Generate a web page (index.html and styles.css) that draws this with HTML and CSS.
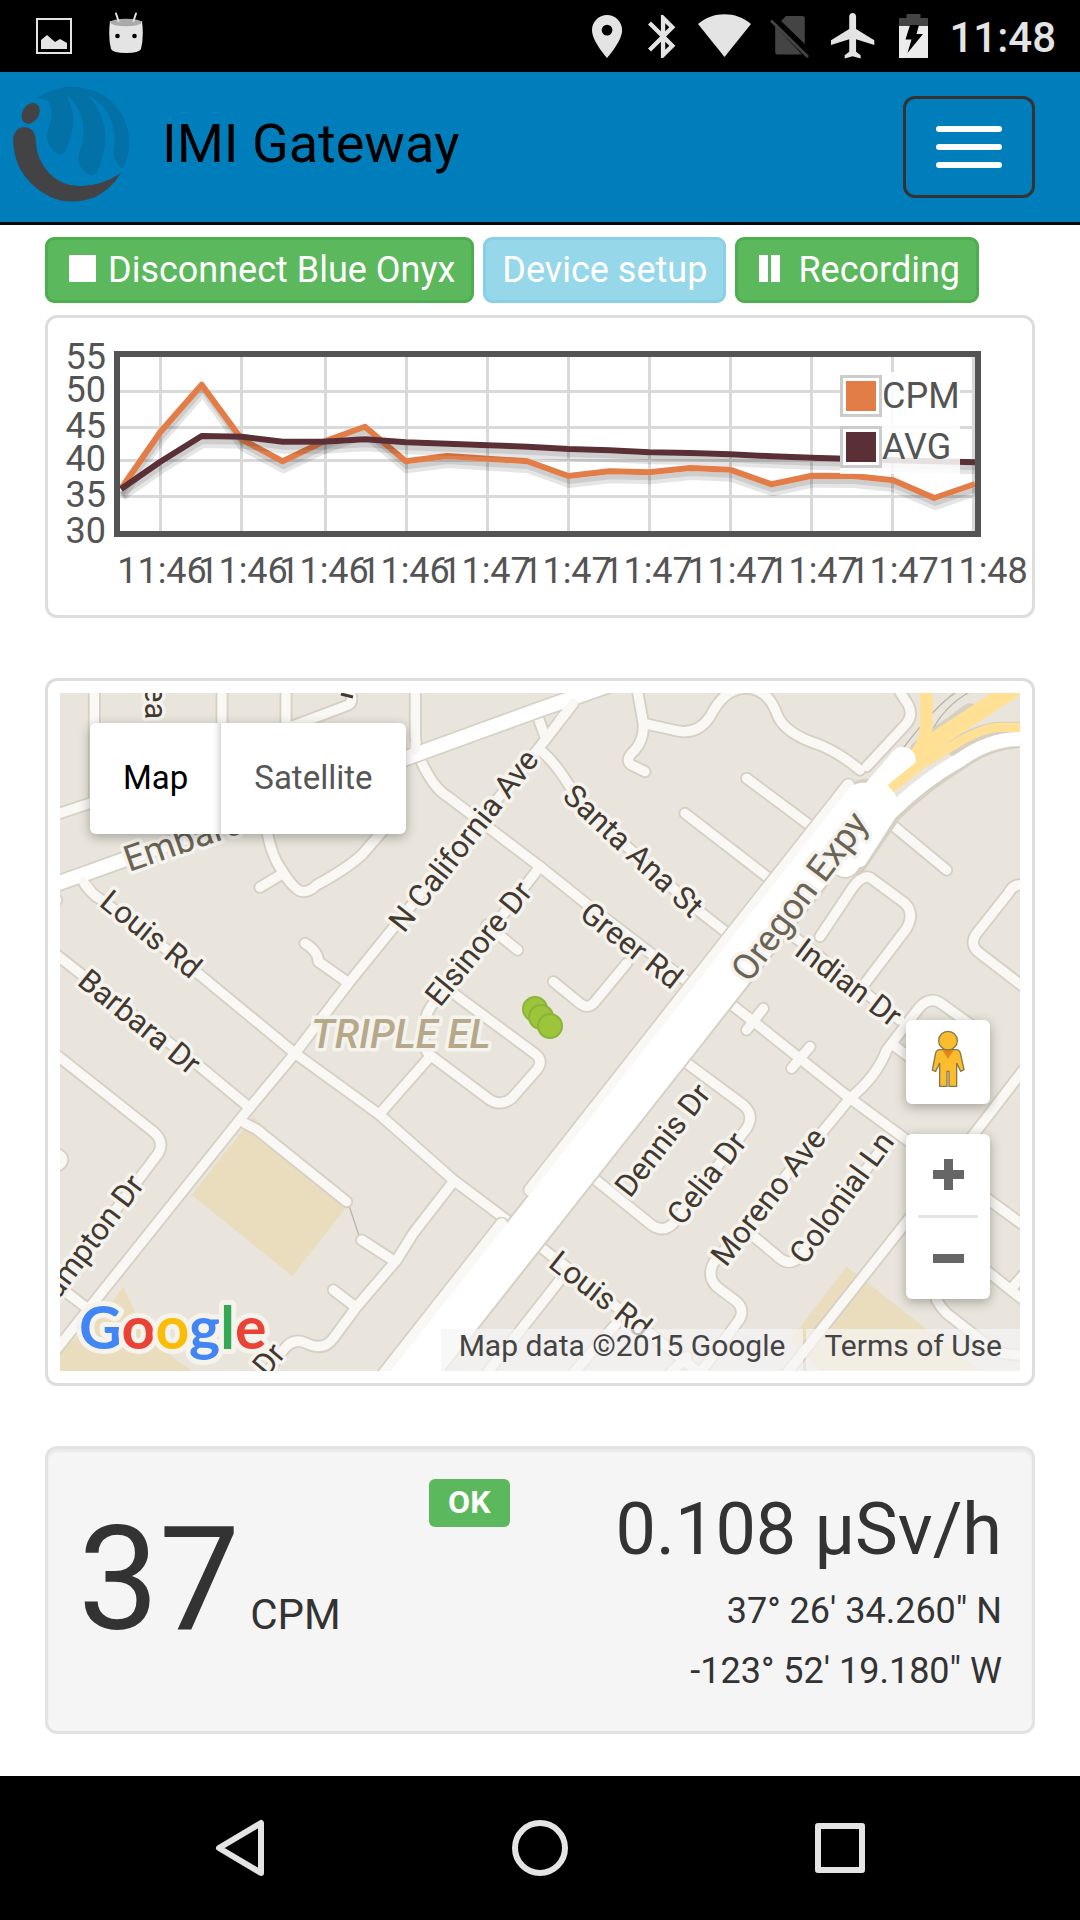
FILE: index.html
```html
<!DOCTYPE html>
<html lang="en">

<head>
    <meta charset="UTF-8">
    <meta name="viewport" content="width=device-width, initial-scale=1.0">
    <title>IMI Gateway</title>
    <link rel="stylesheet" href="styles.css">
</head>

<body>
    <!-- Status bar -->
    <div class="status-bar">
        <div class="status-left">
            <svg width="36" height="48" viewBox="0 0 36 48">
                <rect x="1" y="7" width="34" height="34" fill="none" stroke="#e4e4e4" stroke-width="2"/>
                <path d="M5 37V28L11 23 19 30 24 27 31 31V37z" fill="#e4e4e4"/>
            </svg>
            <svg width="34" height="48" viewBox="0 0 34 48">
                <path d="M1 9Q17 15 33 9Q35 25 32 37Q30 41 17 41Q4 41 2 37Q-1 25 1 9z" fill="#e4e4e4"/>
                <ellipse cx="17" cy="10.500" rx="15.500" ry="3.800" fill="#aaa"/>
                <path d="M7 1.500L9.500 9M27 1.500L24.500 9" stroke="#e4e4e4" stroke-width="2" stroke-linecap="round"/>
                <circle cx="8.500" cy="24" r="2.300"/>
                <circle cx="25.500" cy="24" r="2.300"/>
            </svg>
        </div>
        <div class="status-right">
            <svg width="37" height="48" viewBox="5 .6 17.2 22.3"><path fill="#e4e4e4" d="M12 2C8.130 2 5 5.130 5 9c0 5.250 7 13 7 13s7-7.750 7-13c0-3.870-3.130-7-7-7zm0 9.500a2.500 2.500 0 1 1 0-5 2.500 2.500 0 0 1 0 5z"/></svg>
            <svg width="31" height="48" viewBox="5 .6 14.4 22.3"><path fill="#e4e4e4" d="M17.710 7.710L12 2h-1v7.590L6.410 5 5 6.410 10.590 12 5 17.590 6.410 19 11 14.410V22h1l5.710-5.710-4.300-4.290 4.300-4.290zM13 5.830l1.880 1.880L13 9.590V5.830zm1.880 10.460L13 18.170v-3.760l1.880 1.880z"/></svg>
            <svg width="53" height="48" viewBox="0 0 53 48"><path fill="#e4e4e4" d="M0 12C15-1 38-1 53 12L26.500 45z"/></svg>
            <svg width="42" height="48" viewBox="0 0 42 48">
                <path fill="#444" d="M16 4H32.500q2.300 0 2.300 2.300V32L11 9zM5.200 14L32 42.500H7.500q-2.300 0-2.300-2.300z"/>
                <path stroke="#444" stroke-width="3" d="M1 8.500L38 45"/>
            </svg>
            <svg width="49" height="48" viewBox="2 1.6 21.5 21"><path fill="#e4e4e4" d="M21 16v-2l-8-5V3.500c0-.83-.67-1.500-1.500-1.500S10 2.670 10 3.500V9l-8 5v2l8-2.500V19l-2 1.500V22l3.500-1 3.500 1v-1.500L13 19v-5.500l8 2.500z"/></svg>
            <svg width="31" height="48" viewBox="0 0 31 48">
                <path fill="#444" d="M0 6H7.500V2H21.500V6H29V14H0z"/>
                <path fill="#ececec" d="M0 14H29V46H0z"/>
                <path d="M11 13H20L17.500 22H24L8.500 41 12.500 27.500H6.500z"/>
            </svg>
            <span class="clock">11:48</span>
        </div>
    </div>

    <!-- Navbar -->
    <header class="navbar">
        <a class="brand" href="#">
            <svg class="logo" width="135" height="150" viewBox="0 72 135 150">
                <g transform="scale(.3444 .3333)">
                    <path fill="#0370a6" d="M104 297Q150 262 205 260Q290 262 335 318Q375 365 376 435Q372 480 354 508Q335 490 330 460Q340 400 318 350Q300 308 255 286Q292 330 302 375Q312 420 295 480Q285 520 268 527Q240 520 227 485Q228 455 240 430Q250 370 226 325Q212 300 192 284Q214 325 213 370Q210 400 200 428Q188 462 174 463Q150 460 135 415Q138 390 147 365Q155 325 139 302Q125 294 104 297z"/>
                    <ellipse cx="89" cy="340" rx="24" ry="33" transform="rotate(28 89 340)" fill="#434345"/>
                    <path fill="#434345" d="M70 381Q104 383 104 425Q106 480 145 522Q180 558 230 558Q290 560 351 520Q320 570 275 592Q205 618 145 590Q85 560 55 500Q38 460 38 415Q44 382 70 381z"/>
                </g>
            </svg>
            <span>IMI Gateway</span>
        </a>
        <button class="toggler" type="button" aria-label="Toggle navigation">
            <span class="bar"></span>
            <span class="bar"></span>
            <span class="bar"></span>
        </button>
    </header>

    <main class="container">
        <div class="toolbar">
            <button class="btn btn-success" type="button">
                <svg class="glyph" width="36" height="27" viewBox="0 0 36 27"><rect x="5" width="27" height="27" rx="1" fill="#fff"/></svg>
                Disconnect Blue Onyx
            </button>
            <button class="btn btn-info" type="button" disabled>Device setup</button>
            <button class="btn btn-success" type="button">
                <svg class="glyph" width="36" height="27" viewBox="0 0 36 27"><path d="M5 0h9v27H5zM17 0h9v27H17z" fill="#fff"/></svg>
                Recording
            </button>
        </div>

        <!-- CPM history -->
        <section class="panel">
            <svg class="chart" viewBox="0 0 984 297">
                <defs>
                    <polyline id="cpm" points="73,170.700 112.300,114 153.700,66.700 193.700,121.300 234.700,143.300 275.300,123.700 317,108.700 357.700,143.300 399.300,138 439.300,140.700 479.300,143.300 520.300,158 561.300,153.300 601.300,154.300 642,150 682,151.700 723.700,166.300 764,157.700 805.300,158 845.300,162.300 886.300,180 927,166"/>
                    <polyline id="avg" points="73,171 112.300,143.700 153.700,118 193.700,118.700 234.700,123.700 275.300,123.700 317,121.300 357.700,124.300 399.300,125.700 439.300,127.300 479.300,128.700 520.300,131 561.300,132.300 601.300,134.300 642,135 682,136.300 723.700,138.300 764,139.700 805.300,141 845.300,142.300 886.300,143.300 927,144.300"/>
                </defs>
                <path class="grid" d="M112.500 39V213M193.500 39V213M277.500 39V213M358.500 39V213M439.500 39V213M520.500 39V213M601.500 39V213M682.500 39V213M763.500 39V213M844.500 39V213M925.500 39V213M72 73.500H927M72 109.500H927M72 142.500H927M72 178.500H927"/>
                <g class="series">
                    <use href="#cpm" class="shadow" stroke-width="9" x="1" y="7.500"/>
                    <use href="#cpm" class="shadow" stroke-width="5" x="1" y="5.500"/>
                    <use href="#cpm" stroke="#e27d48" stroke-width="6"/>
                    <use href="#avg" class="shadow" stroke-width="9" x="1" y="7.500"/>
                    <use href="#avg" class="shadow" stroke-width="5" x="1" y="5.500"/>
                    <use href="#avg" stroke="#5a2f36" stroke-width="6"/>
                </g>
                <rect x="69" y="36" width="861" height="180" fill="none" stroke="#545454" stroke-width="6"/>
                <rect x="792" y="54" width="120" height="102" fill="#fff" opacity=".85"/>
                <rect x="793.500" y="58.500" width="39" height="39" fill="#fff" stroke="#ccc" stroke-width="3"/>
                <rect x="798" y="63" width="30" height="30" fill="#e27d48"/>
                <rect x="793.500" y="109.500" width="39" height="39" fill="#fff" stroke="#ccc" stroke-width="3"/>
                <rect x="798" y="114" width="30" height="30" fill="#5a2f36"/>
                <text x="834" y="90">CPM</text>
                <text x="834" y="141">AVG</text>
                <g text-anchor="end">
                    <text x="58" y="51">55</text>
                    <text x="58" y="84">50</text>
                    <text x="58" y="120">45</text>
                    <text x="58" y="153">40</text>
                    <text x="58" y="189">35</text>
                    <text x="58" y="225">30</text>
                </g>
                <g text-anchor="middle">
                    <text x="114" y="265">11:46</text>
                    <text x="195" y="265">11:46</text>
                    <text x="276" y="265">11:46</text>
                    <text x="357" y="265">11:46</text>
                    <text x="438" y="265">11:47</text>
                    <text x="519" y="265">11:47</text>
                    <text x="600" y="265">11:47</text>
                    <text x="684" y="265">11:47</text>
                    <text x="765" y="265">11:47</text>
                    <text x="846" y="265">11:47</text>
                    <text x="935" y="265">11:48</text>
                </g>
            </svg>
        </section>

        <!-- Map -->
        <section class="panel map-panel">
            <div class="map">
                <svg class="map-canvas" viewBox="0 0 960 678">
                    <defs>
                        <g id="streets">
                            <path d="M163 50V400M546 50V300M738 50V200M740 175L925 105Q945 95 925 50M50 433L300 350"/>
                            <path d="M1126 50V200Q1130 260 1165 315Q1190 360 1230 385L1500 590 1640 702 1975 960M2070 1000L2160 1070 2430 1285 2600 1410 2950 1665"/>
                            <path d="M1600 100L1500 230 925 940 765 1150 615 1330 155 1905 40 2050M1490 130L1515 200"/>
                            <path d="M130 635Q150 670 185 690L480 915 765 1150 1020 1335 1240 1530 1440 1680M1500 1730L1590 1800 1980 2110"/>
                            <path d="M50 855L480 1190 625 1310M50 1155L340 1385Q375 1415 355 1450L60 1840M50 1845L155 1925"/>
                            <path d="M680 480Q695 560 725 600Q765 665 790 665Q810 665 830 645Q930 590 970 550L1030 480M730 610L660 652"/>
                            <path d="M795 820Q835 845 835 875L920 935M1500 590L1200 980M1340 765L1433 840"/>
                            <path d="M1240 970L1490 1155Q1510 1175 1490 1200L1415 1285Q1385 1310 1350 1290L1170 1155M1200 980Q1150 1020 1152 1090V1130L1170 1160 1025 1325"/>
                            <path d="M1540 935L1620 1000Q1645 1020 1665 995L1760 880M1500 240Q1540 270 1590 350L1750 520 1960 710 2075 800"/>
                            <path d="M1935 430L2200 635M2120 325L2335 485M1790 50L1810 160Q1812 210 1785 240Q1745 275 1785 290L1815 305"/>
                            <path d="M1810 160L1900 180Q1970 200 2010 140Q2050 60 2110 55Q2180 50 2210 130Q2230 190 2340 225Q2400 250 2460 300"/>
                            <path d="M2570 50L2605 105Q2620 135 2600 160L2480 290M2545 455L2720 600"/>
                            <path d="M2340 800L2440 650Q2475 605 2500 630L2595 700Q2625 730 2600 775L2460 960M2250 790L2580 1050"/>
                            <path d="M2950 645Q2920 640 2905 670L2810 790Q2785 825 2820 850L2950 950"/>
                            <path d="M2800 1070L2710 1005Q2675 975 2640 1010L2540 1140Q2510 1220 2430 1285L2360 1370 2020 1780Q2000 1820 2030 1850L2090 1895Q2120 1925 2090 1960L1980 2110M2560 1125L2620 1170"/>
                            <path d="M2310 1130L2255 1195M2170 1015L2120 1080"/>
                            <path d="M1935 1175L2110 1305Q2145 1335 2120 1375L1900 1660Q1870 1690 1835 1665L1655 1520M2130 1690L2220 1765Q2250 1790 2280 1760L2530 1430"/>
                            <path d="M2950 1200L2600 1655 2240 2110M2680 1690L2850 1810 2950 1890M2915 1855L2950 1815M2690 1890Q2700 1910 2720 1930L2860 2040Q2890 2055 2950 2055"/>
                            <path d="M1560 1830L1340 2110M1730 1960L1600 2110M1890 2110L1940 2060"/>
                            <path d="M1240 1535L1120 1690 1070 1770 950 1910 880 2005Q850 2045 800 2020Q760 2000 730 2040L680 2110M965 1710L1050 1765M880 1860L945 1910"/>
                            <path d="M615 1360L650 1378 920 1595M50 1450Q70 1460 68 1470Q68 1480 50 1490M50 690V690"/>
                        </g>
                        <path id="embarcadero" d="M40 645L250 570 1110 260 1500 118 1700 48"/>
                    </defs>
                    <rect width="960" height="678" fill="#e9e5dc"/>
                    <g transform="translate(-20 -23) scale(.33333)">
                        <g fill="#e9ddbd">
                            <path d="M640 1340L455 1575 757 1818 920 1610z"/>
                            <path d="M50 2055L200 1920 250 1850 300 1960 350 2025 465 2110H50z"/>
                            <path d="M2420 1790L2830 2110H2350L2250 2010z"/>
                        </g>
                        <path d="M928 1610L958 1700M2680 175Q2720 100 2800 60M2585 240Q2700 90 2760 60" fill="none" stroke="#b9b4a8" stroke-width="4"/>
                        <g class="road">
                            <use href="#streets" stroke="#d6d0c4" stroke-width="39"/>
                            <use href="#streets" stroke="#faf8f4" stroke-width="28"/>
                            <use href="#embarcadero" stroke="#d6d0c4" stroke-width="52"/>
                            <use href="#embarcadero" stroke="#fff" stroke-width="42"/>
                            <path d="M1126 220V240M1600 100L1560 150M130 635L150 660" stroke="#faf8f4" stroke-width="28"/>

                            <!-- Oregon Expy and its ramps -->
                            <path d="M1110 2130L1930 1090 2470 400M1025 2120L1385 1662M1470 1560L2425 345" stroke="#d6d0c4" stroke-width="44"/>
                            <path d="M1110 2130L1930 1090 2475 395" stroke="#d6d0c4" stroke-width="136"/>
                            <path d="M2450 590L2560 430Q2660 335 2760 275Q2850 208 2950 208" stroke="#d6d0c4" stroke-width="52"/>
                            <path d="M2415 578L2490 470" stroke="#d6d0c4" stroke-width="96"/>
                            <path d="M2790 130L2640 240M2950 185H2880Q2830 185 2750 232" stroke="#d6d0c4" stroke-width="60"/>
                            <path d="M1025 2120L1385 1662M1470 1560L2425 345" stroke="#faf8f4" stroke-width="34"/>
                            <path d="M2659 50V160Q2659 200 2640 240L2600 280" stroke="#ffe094" stroke-width="38"/>
                            <path d="M2930 50L2650 235 2600 300" stroke="#ffe094" stroke-width="52"/>
                            <path d="M2415 578L2490 470" stroke="#fff" stroke-width="86"/>
                            <path d="M1110 2130L1930 1090 2470 400M2450 500L2510 400" stroke="#fff" stroke-width="124"/>
                            <path d="M2460 420L2588 270" stroke="#fff" stroke-width="78"/>
                            <path d="M2460 570L2550 430Q2650 330 2760 270Q2850 205 2950 207" stroke="#fff" stroke-width="42"/>
                            <path d="M2950 172H2880Q2830 172 2750 220L2640 285 2552 356" stroke="#ffe094" stroke-width="28" stroke-linecap="butt"/>
                        </g>
                    </g>
                    <path d="M281 1L293 4" stroke="#43382f" stroke-width="3"/>
                    <g class="labels">
                        <text transform="translate(85 -7) rotate(90)">ea</text>
                        <text transform="translate(38 212) rotate(39)">Louis Rd</text>
                        <text transform="translate(16 291) rotate(39)">Barbara Dr</text>
                        <text transform="translate(344 241) rotate(-52)">N California Ave</text>
                        <text transform="translate(380 315) rotate(-51)">Elsinore Dr</text>
                        <text transform="translate(501 105) rotate(43)">Santa Ana St</text>
                        <text transform="translate(518 224) rotate(38)">Greer Rd</text>
                        <text transform="translate(733 261) rotate(37)">Indian Dr</text>
                        <text transform="translate(570 506) rotate(-52)">Dennis Dr</text>
                        <text transform="translate(622 534) rotate(-52)">Celia Dr</text>
                        <text transform="translate(666 575) rotate(-52)">Moreno Ave</text>
                        <text transform="translate(745 573) rotate(-54)">Colonial Ln</text>
                        <text transform="translate(487 573) rotate(38)">Louis Rd</text>
                        <text transform="translate(-15 625) rotate(-53)">Hampton Dr</text>
                        <text transform="translate(207 685) rotate(-50)">Dr</text>
                        <text class="major" transform="translate(69 179) rotate(-19)">Embarcadero</text>
                        <text class="major" transform="translate(689 291) rotate(-53)">Oregon Expy</text>
                        <text class="area" x="251" y="355">TRIPLE EL</text>
                    </g>
                    <g fill="#9cc53b" stroke="#8bb33a" stroke-width="2">
                        <circle cx="475" cy="316" r="12"/>
                        <circle cx="481" cy="324" r="12"/>
                        <circle cx="490" cy="333" r="12"/>
                    </g>
                    <text class="google" x="19" y="656"><tspan fill="#4285f4">G</tspan><tspan fill="#ea4335">o</tspan><tspan fill="#fbbc05">o</tspan><tspan fill="#4285f4">g</tspan><tspan fill="#34a853">l</tspan><tspan fill="#ea4335">e</tspan></text>
                </svg>

                <div class="map-type">
                    <button class="active" type="button">Map</button>
                    <button type="button">Satellite</button>
                </div>
                <div class="map-controls">
                    <button class="pegman" type="button" aria-label="Street View">
                        <svg width="34" height="58" viewBox="1173 1 102 174" stroke="#86774f" stroke-width="4">
                            <path fill="#fbbd2d" d="M1200 60H1248Q1258 60 1261 70L1272 120 1262 125 1250 100V170H1227V125H1221V170H1199V100L1187 125 1177 121 1187 70Q1190 60 1200 60z"/>
                            <path fill="#e5851c" stroke="none" d="M1207 61H1241L1224 88z"/>
                            <circle fill="#fbbd2d" cx="1224" cy="33" r="28"/>
                        </svg>
                    </button>
                    <div class="zoom">
                        <button type="button" aria-label="Zoom in">
                            <svg width="31" height="31" viewBox="0 0 31 31"><path d="M11 0h9v11h11v9H20v11h-9V20H0v-9h11z" fill="#666"/></svg>
                        </button>
                        <button type="button" aria-label="Zoom out">
                            <svg width="31" height="9" viewBox="0 0 31 9"><path d="M0 0h31v9H0z" fill="#666"/></svg>
                        </button>
                    </div>
                </div>
                <div class="attribution">
                    <span>Map data ©2015 Google</span>
                    <a href="#">Terms of Use</a>
                </div>
            </div>
        </section>

        <!-- Current reading -->
        <section class="well">
            <div class="count"><span class="value">37</span> CPM</div>
            <span class="label">OK</span>
            <div class="details">
                <div class="dose">0.108 μSv/h</div>
                <div>37° 26' 34.260" N</div>
                <div>-123° 52' 19.180" W</div>
            </div>
        </section>
    </main>

    <!-- Soft keys -->
    <nav class="soft-keys">
        <button type="button" aria-label="Back">
            <svg width="60" height="60" viewBox="0 0 60 60"><path d="M51 5V55L9 30z"/></svg>
        </button>
        <button type="button" aria-label="Home">
            <svg width="60" height="60" viewBox="0 0 60 60"><circle cx="30" cy="30" r="25"/></svg>
        </button>
        <button type="button" aria-label="Recent apps">
            <svg width="60" height="60" viewBox="0 0 60 60"><rect x="8" y="8" width="44" height="44"/></svg>
        </button>
    </nav>
</body>

</html>
```

FILE: styles.css
```css
* {
    box-sizing: border-box;
}

body {
    margin: 0;
    min-height: 100vh;
    display: flex;
    flex-direction: column;
    background-color: #fff;
    color: #333;
    font-family: Roboto, sans-serif;
    font-size: 36px;
}

button {
    margin: 0;
    padding: 0;
    border: none;
    background: none;
    font-family: inherit;
    cursor: pointer;
}

svg {
    display: block;
}

/* Status bar */
.status-bar {
    display: flex;
    justify-content: space-between;
    align-items: center;
    height: 72px;
    padding: 0 24px 0 36px;
    background-color: #000;
}

.status-left,
.status-right {
    display: flex;
    align-items: center;
}

.status-left {
    gap: 37px;
}

.status-right {
    gap: 19px;
}

.clock {
    padding-top: 3px;
    color: #e4e4e4;
    font-size: 42px;
    font-weight: 500;
    line-height: 48px;
}

/* Navbar */
.navbar {
    display: flex;
    justify-content: space-between;
    align-items: center;
    padding-right: 45px;
    background-color: #007dbb;
    border-bottom: 3px solid #080808;
}

.brand {
    display: flex;
    align-items: center;
    gap: 27px;
    color: #000;
    font-size: 54px;
    line-height: 60px;
    text-decoration: none;
}

.brand span {
    padding-bottom: 6px;
}

.toggler {
    display: flex;
    flex-direction: column;
    gap: 12px;
    padding: 27px 30px;
    border: 3px solid #333;
    border-radius: 12px;
}

.bar {
    width: 66px;
    height: 6px;
    border-radius: 3px;
    background-color: #fff;
}

/* Content */
.container {
    flex: 1;
    padding: 12px 45px 42px;
}

.toolbar {
    display: flex;
    gap: 9px;
    margin-bottom: 12px;
}

.btn {
    display: flex;
    align-items: center;
    gap: 8px;
    padding: 3px 16px;
    border: 3px solid;
    border-radius: 9px;
    color: #fff;
    font-size: 36px;
    line-height: 54px;
}

.btn-success {
    background-color: #5cb85c;
    border-color: #4cae4c;
}

.btn-info {
    background-color: #96d7e9;
    border-color: #87d0e6;
}

.glyph {
    margin-bottom: 3px;
}

.panel {
    margin-bottom: 60px;
    border: 3px solid #ddd;
    border-radius: 12px;
}

/* Chart */
.chart {
    width: 100%;
    height: auto;
}

.chart text {
    fill: #545454;
    font-size: 36px;
}

.grid {
    stroke: #545454;
    stroke-opacity: 0.22;
    stroke-width: 3;
}

.series {
    fill: none;
    stroke-linejoin: round;
}

.shadow {
    stroke: rgba(0, 0, 0, 0.1);
}

/* Map */
.map-panel {
    padding: 12px;
}

.map {
    position: relative;
    overflow: hidden;
}

.map-canvas {
    width: 100%;
    height: auto;
}

.road {
    fill: none;
    stroke-linecap: round;
    stroke-linejoin: round;
}

.labels text {
    fill: #43382f;
    stroke: #f5f3ee;
    stroke-width: 7px;
    stroke-linejoin: round;
    paint-order: stroke;
    font-size: 31px;
}

.labels .major {
    fill: #6b6455;
    font-size: 36px;
}

.labels .area {
    fill: #b5a98a;
    font-size: 40px;
    font-style: italic;
    font-weight: 500;
}

.google {
    font-family: Lato, sans-serif;
    font-size: 59px;
    font-weight: 700;
    stroke: #f6f3ec;
    stroke-width: 10px;
    stroke-linejoin: round;
    paint-order: stroke;
}

.map-type,
.zoom,
.pegman {
    border-radius: 6px;
    background-color: #fff;
    box-shadow: 0 3px 12px rgba(0, 0, 0, 0.3);
}

.map-type {
    position: absolute;
    top: 30px;
    left: 30px;
    display: flex;
    overflow: hidden;
}

.map-type button {
    padding: 35px 33px 37px;
    color: #565656;
    font-size: 33px;
    line-height: 39px;
}

.map-type .active {
    color: #000;
    box-shadow: inset -9px 0 9px -9px rgba(0, 0, 0, 0.3);
}

.map-controls {
    position: absolute;
    right: 30px;
    bottom: 72px;
    display: flex;
    flex-direction: column;
    gap: 30px;
}

.pegman {
    display: flex;
    justify-content: center;
    align-items: center;
    width: 84px;
    height: 84px;
    padding-bottom: 6px;
}

.zoom {
    display: flex;
    flex-direction: column;
    padding: 0 12px;
}

.zoom button {
    display: flex;
    justify-content: center;
    align-items: center;
    height: 81px;
}

.zoom button + button {
    height: 84px;
    border-top: 3px solid #e4e4e4;
}

.attribution {
    position: absolute;
    right: 0;
    bottom: 0;
    display: flex;
    gap: 3px;
    font-size: 30px;
    line-height: 34px;
}

.attribution span,
.attribution a {
    padding: 0 18px 8px;
    background-color: rgba(245, 245, 245, 0.7);
    color: #444;
    text-decoration: none;
}

/* Reading */
.well {
    display: grid;
    grid-template-columns: 38% auto 1fr;
    align-items: start;
    padding: 30px;
    border: 3px solid #e3e3e3;
    border-radius: 12px;
    background-color: #f5f5f5;
    box-shadow: inset 0 3px 3px rgba(0, 0, 0, 0.05);
}

.count {
    margin-top: 28px;
    font-size: 42px;
    line-height: 145px;
}

.count .value {
    font-size: 144px;
}

.label {
    padding: 5px 19px 7px;
    border-radius: 6px;
    background-color: #5cb85c;
    color: #fff;
    font-size: 32px;
    font-weight: 700;
    line-height: 36px;
}

.details {
    margin-top: 8px;
    line-height: 60px;
    text-align: right;
}

.dose {
    margin-bottom: 9px;
    font-size: 72px;
    line-height: 85px;
}

/* Soft keys */
.soft-keys {
    display: flex;
    justify-content: center;
    align-items: center;
    gap: 240px;
    height: 144px;
    background-color: #000;
}

.soft-keys svg {
    fill: none;
    stroke: #e4e4e4;
    stroke-width: 6px;
    stroke-linejoin: round;
}
```
